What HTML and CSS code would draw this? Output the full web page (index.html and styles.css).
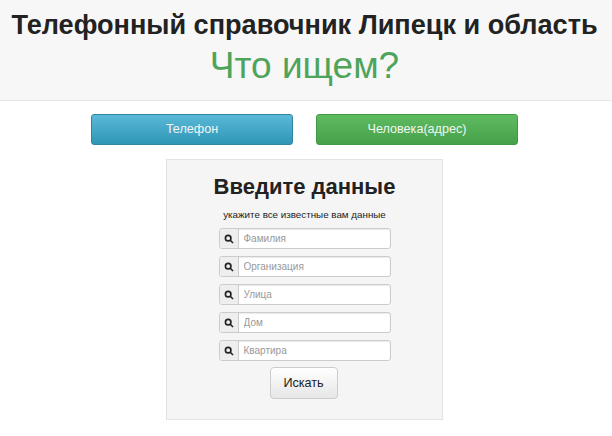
FILE: index.html
```html
<!DOCTYPE html>
<html lang="ru">
<head>
  <meta charset="UTF-8">
  <title>Телефонный справочник Липецк и область</title>
  <link rel="stylesheet" href="styles.css">
</head>
<body>
  <header class="top">
    <h1>Телефонный справочник Липецк и область</h1>
    <p class="top-question">Что ищем?</p>
  </header>

  <nav class="choice">
    <a class="btn-big btn-blue" href="#">Телефон</a>
    <a class="btn-big btn-green" href="#">Человека(адрес)</a>
  </nav>

  <form class="well">
    <h2>Введите данные</h2>
    <p class="hint">укажите все известные вам данные</p>

    <div class="field">
      <span class="addon"><svg viewBox="0 0 12 12"><circle cx="5" cy="5" r="3.3"/><path d="M7.5 7.5 10.8 10.8"/></svg></span>
      <input type="text" placeholder="Фамилия">
    </div>
    <div class="field">
      <span class="addon"><svg viewBox="0 0 12 12"><circle cx="5" cy="5" r="3.3"/><path d="M7.5 7.5 10.8 10.8"/></svg></span>
      <input type="text" placeholder="Организация">
    </div>
    <div class="field">
      <span class="addon"><svg viewBox="0 0 12 12"><circle cx="5" cy="5" r="3.3"/><path d="M7.5 7.5 10.8 10.8"/></svg></span>
      <input type="text" placeholder="Улица">
    </div>
    <div class="field">
      <span class="addon"><svg viewBox="0 0 12 12"><circle cx="5" cy="5" r="3.3"/><path d="M7.5 7.5 10.8 10.8"/></svg></span>
      <input type="text" placeholder="Дом">
    </div>
    <div class="field">
      <span class="addon"><svg viewBox="0 0 12 12"><circle cx="5" cy="5" r="3.3"/><path d="M7.5 7.5 10.8 10.8"/></svg></span>
      <input type="text" placeholder="Квартира">
    </div>

    <button class="btn-search" type="button">Искать</button>
  </form>
</body>
</html>
```

FILE: styles.css
```css
body {
  margin: 0;
  padding-right: 3px;
  font-family: "Liberation Sans", Arial, sans-serif;
  background: white;
  color: #222;
}
.top {
  background: #f7f7f7;
  border-bottom: 1px solid #e6e6e6;
  height: 101px;
  margin-right: -3px;
  padding: 9px 3px 0 0;
  text-align: center;
  box-sizing: border-box;
}
.top h1 {
  margin: 0;
  font-size: 27.1px;
  line-height: 32px;
  font-weight: bold;
  white-space: nowrap;
}
.top-question {
  margin: 3px 0 0;
  font-size: 37px;
  line-height: 44px;
  color: #4ea45a;
}
.choice {
  display: flex;
  justify-content: center;
  gap: 23px;
  margin-top: 13px;
}
.btn-big {
  width: 202px;
  height: 31px;
  box-sizing: border-box;
  line-height: 29px;
  text-align: center;
  font-size: 12.6px;
  color: #f2f6f2;
  text-decoration: none;
  border-radius: 3px;
  border: 1px solid;
}
.btn-blue {
  background: linear-gradient(#5bb8d8, #2f96b6);
  border-color: #2f85a2;
}
.btn-green {
  background: linear-gradient(#5fbb60, #46a14a);
  border-color: #419945;
}
.well {
  width: 277px;
  height: 261px;
  box-sizing: border-box;
  margin: 14px auto 0;
  background: #f5f5f5;
  border: 1px solid #e3e3e3;
  display: flex;
  flex-direction: column;
  align-items: center;
  padding-top: 14px;
}
.well h2 {
  margin: 0;
  font-size: 22px;
  line-height: 26px;
  font-weight: bold;
}
.hint {
  margin: 8px 0 6px;
  font-size: 9.8px;
  line-height: 14px;
}
.field {
  display: flex;
  width: 172px;
  height: 21px;
  margin-bottom: 7px;
  border: 1px solid #ccc;
  border-radius: 3px;
  box-sizing: border-box;
  background: white;
  box-shadow: inset 0 1px 1px rgba(0,0,0,0.08);
}
.addon {
  width: 18px;
  flex: none;
  background: #eee;
  border-right: 1px solid #ccc;
  border-radius: 3px 0 0 3px;
  display: flex;
  align-items: center;
  justify-content: center;
}
.addon svg {
  width: 10px;
  height: 10px;
  fill: none;
  stroke: #222;
  stroke-width: 2;
}
.field input {
  flex: 1;
  min-width: 0;
  border: none;
  background: none;
  outline: none;
  padding: 0 5px;
  font-family: inherit;
  font-size: 10px;
}
.field input::placeholder {
  color: #999;
}
.btn-search {
  width: 68px;
  height: 32px;
  margin: -1px 2px 0 0;
  font-family: inherit;
  font-size: 12.6px;
  color: #222;
  background: linear-gradient(#fff, #e6e6e6);
  border: 1px solid #ccc;
  border-radius: 4px;
}
```
